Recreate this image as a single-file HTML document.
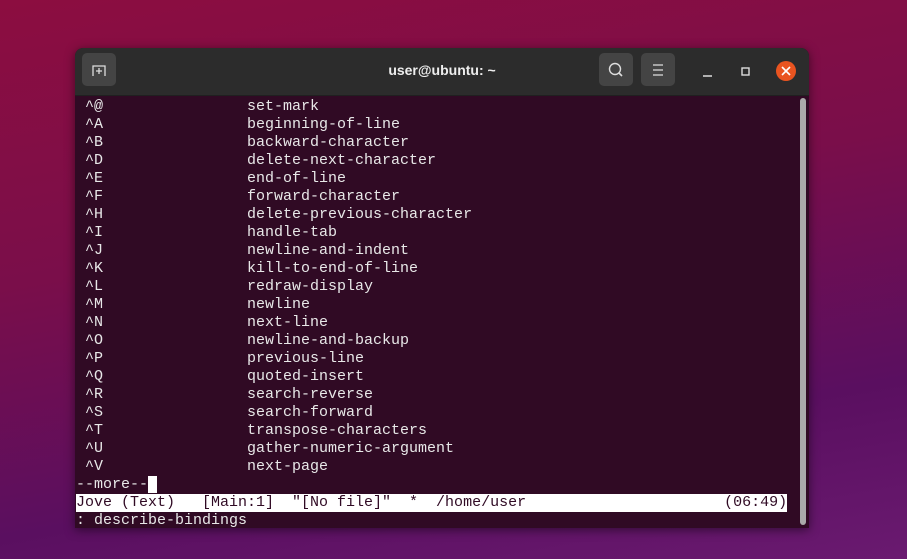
<!DOCTYPE html><html><head><style>
body{margin:0;width:907px;height:559px;overflow:hidden;position:relative;background:linear-gradient(170deg,#8c0d40 0%,#7a0e4a 40%,#5a0f60 75%,#6a1a70 100%);font-family:"Liberation Mono",monospace;}
.win{position:absolute;left:75px;top:48px;width:734px;height:480px;background:#300a24;border-radius:8px 8px 0 0;overflow:hidden;box-shadow:0 2px 10px rgba(0,0,0,.5)}
.hd{height:47px;background:#2c2c2c;position:relative;border-bottom:1px solid #202020}
.btn{position:absolute;top:5px;width:34px;height:33px;background:#444;border-radius:5px}
.title{position:absolute;left:0;right:0;top:14px;text-align:center;color:#eee;font:bold 14px "Liberation Sans",sans-serif}
.term{position:absolute;left:1px;top:50px;color:#e8e8e8;font-size:15px;line-height:18px;white-space:pre}
.sb{position:absolute;left:725px;top:50px;width:6px;height:427px;background:#aaa;border-radius:3px}
.st{background:#fff;color:#300a24;display:inline-block;width:711px}
</style></head><body>
<div class="win">
<div class="hd">
<div class="btn" style="left:7px"><svg width="34" height="33"><path d="M11 23V13H23V23M17 15V21M14 18H20" stroke="#ddd" stroke-width="1.3" fill="none"/></svg></div>
<div class="title">user@ubuntu: ~</div>
<div class="btn" style="left:524px"><svg width="34" height="33"><circle cx="16" cy="16" r="5.5" stroke="#ddd" stroke-width="1.4" fill="none"/><path d="M20 20L23 23" stroke="#ddd" stroke-width="1.6"/></svg></div>
<div class="btn" style="left:566px"><svg width="34" height="33"><path d="M12 12H22M12 17H22M12 22H22" stroke="#ddd" stroke-width="1.3"/></svg></div>
<svg style="position:absolute;left:620px;top:10px" width="110" height="30"><path d="M8 18H17" stroke="#ddd" stroke-width="1.5"/><rect x="47" y="10" width="7" height="7" stroke="#ddd" stroke-width="1.4" fill="none"/><circle cx="91" cy="13" r="10" fill="#e95420"/><path d="M87 9L95 17M95 9L87 17" stroke="#fff" stroke-width="1.6"/></svg>
</div>
<div class="term"> ^@                set-mark
 ^A                beginning-of-line
 ^B                backward-character
 ^D                delete-next-character
 ^E                end-of-line
 ^F                forward-character
 ^H                delete-previous-character
 ^I                handle-tab
 ^J                newline-and-indent
 ^K                kill-to-end-of-line
 ^L                redraw-display
 ^M                newline
 ^N                next-line
 ^O                newline-and-backup
 ^P                previous-line
 ^Q                quoted-insert
 ^R                search-reverse
 ^S                search-forward
 ^T                transpose-characters
 ^U                gather-numeric-argument
 ^V                next-page
--more--<span style="background:#fff"> </span>
<span class="st">Jove (Text)   [Main:1]  "[No file]"  *  /home/user                      (06:49)</span>
: describe-bindings</div>
<div class="sb"></div>
</div>
</body></html>
